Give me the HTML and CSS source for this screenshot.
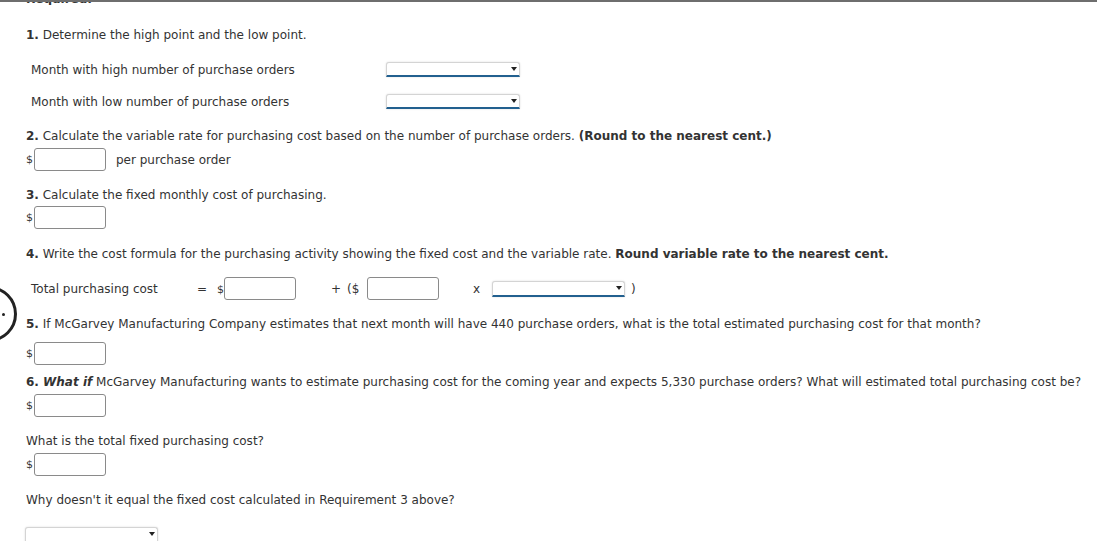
FILE: index.html
```html
<!DOCTYPE html>
<html>
<head>
<meta charset="utf-8">
<link rel="stylesheet" href="styles.css">
</head>
<body>
<div class="page">
  <div class="req-clip"><div class="req">Required:</div></div>

  <div class="q q1"><b>1.</b> Determine the high point and the low point.</div>
  <div class="sel-row r-high">
    <span class="lbl">Month with high number of purchase orders</span>
    <span class="dd"></span>
  </div>
  <div class="sel-row r-low">
    <span class="lbl">Month with low number of purchase orders</span>
    <span class="dd"></span>
  </div>

  <div class="q q2"><b>2.</b> Calculate the variable rate for purchasing cost based on the number of purchase orders. <b>(Round to the nearest cent.)</b></div>
  <div class="money m2"><span class="cur">$</span><span class="inp"></span><span class="after">per purchase order</span></div>

  <div class="q q3"><b>3.</b> Calculate the fixed monthly cost of purchasing.</div>
  <div class="money m3"><span class="cur">$</span><span class="inp"></span></div>

  <div class="q q4"><b>4.</b> Write the cost formula for the purchasing activity showing the fixed cost and the variable rate. <b>Round variable rate to the nearest cent.</b></div>
  <div class="formula">
    <span class="f-lbl">Total purchasing cost</span>
    <span class="f-eq">=</span>
    <span class="f-cur">$</span><span class="inp"></span>
    <span class="f-plus">+</span>
    <span class="f-paren">($</span><span class="inp"></span>
    <span class="f-x">x</span>
    <span class="dd dd-f"></span>
    <span class="f-close">)</span>
  </div>

  <div class="q q5"><b>5.</b> If McGarvey Manufacturing Company estimates that next month will have 440 purchase orders, what is the total estimated purchasing cost for that month?</div>
  <div class="money m5"><span class="cur">$</span><span class="inp"></span></div>

  <div class="q q6"><b>6. <i>What if</i></b> McGarvey Manufacturing wants to estimate purchasing cost for the coming year and expects 5,330 purchase orders? What will estimated total purchasing cost be?</div>
  <div class="money m6"><span class="cur">$</span><span class="inp"></span></div>

  <div class="q q7">What is the total fixed purchasing cost?</div>
  <div class="money m7"><span class="cur">$</span><span class="inp"></span></div>

  <div class="q q8">Why doesn't it equal the fixed cost calculated in Requirement 3 above?</div>
  <div class="bottom-dd"><span class="dd dd-b"></span></div>
</div>
<div class="nav-circle"><span class="nav-dot"></span></div>
</body>
</html>
```

FILE: styles.css
```css
html, body {
  margin: 0;
  padding: 0;
  background: #fff;
}
body {
  font-family: "DejaVu Sans", Verdana, sans-serif;
  font-size: 12px;
  color: #333;
  height: 541px;
  overflow: hidden;
  border-top: 2px solid #6e6e6e;
  box-sizing: border-box;
}
.page {
  padding-left: 26px;
  padding-right: 10px;
}
.req-clip {
  height: 3px;
  overflow: hidden;
}
.req {
  font-weight: bold;
  line-height: 16px;
  margin-top: -11px;
}
.q {
  line-height: 16px;
  padding-top: 1px;
  white-space: nowrap;
}
.q1 { margin-top: 21px; }
.sel-row {
  display: flex;
  align-items: center;
  height: 16px;
  padding-left: 5px;
}
.sel-row .lbl { padding-top: 1px; }
.r-high { margin-top: 18px; }
.r-low { margin-top: 16px; }
.lbl {
  width: 355px;
  line-height: 16px;
}
.dd {
  display: inline-block;
  position: relative;
  width: 134px;
  height: 15px;
  box-sizing: border-box;
  border: 1px solid #d4d4d4;
  border-bottom: 2px solid #22608f;
  border-radius: 3px 3px 0 0;
  box-shadow: 0 0 2px rgba(0,0,0,0.15);
  background: #fff;
}
.dd::after {
  content: "";
  position: absolute;
  right: 2px;
  top: 4px;
  border-left: 3px solid transparent;
  border-right: 3px solid transparent;
  border-top: 4px solid #222;
}
.q2 { margin-top: 18px; }
.money {
  display: flex;
  align-items: center;
  height: 23px;
}
.cur {
  width: 8px;
  font-size: 11px;
}
.inp {
  display: inline-block;
  width: 72px;
  height: 23px;
  box-sizing: border-box;
  border: 1px solid #8a8a8a;
  border-radius: 3px;
  background: #fff;
}
.after { margin-left: 10px; padding-top: 1px; }
.m2 { margin-top: 4px; }
.q3 { margin-top: 15px; }
.m3 { margin-top: 3px; }
.q4 { margin-top: 16px; }
.formula {
  display: flex;
  align-items: center;
  height: 23px;
  margin-top: 15px;
  padding-left: 5px;
}
.formula > span:not(.inp):not(.dd) { padding-top: 1px; }
.f-lbl { width: 166px; }
.f-eq { width: 20px; }
.f-cur { width: 7px; font-size: 11px; }
.f-plus { margin-left: 35px; width: 16px; }
.f-paren { width: 20px; }
.f-x { margin-left: 34px; width: 19px; }
.dd-f { width: 133px; height: 16px; }
.f-close { margin-left: 6px; }
.q5 { margin-top: 15px; }
.m5 { margin-top: 10px; }
.q6 { margin-top: 8px; }
.m6 { margin-top: 4px; }
.q7 { margin-top: 15px; }
.m7 { margin-top: 4px; }
.q8 { margin-top: 15px; }
.bottom-dd {
  margin-top: 19px;
  margin-left: -1px;
  height: 16px;
}
.dd-b { width: 133px; height: 16px; }
.nav-circle {
  position: absolute;
  left: -39px;
  top: 286px;
  width: 50px;
  height: 50px;
  border: 3px solid #222;
  border-radius: 50%;
}
.nav-dot {
  position: absolute;
  left: 38px;
  top: 24px;
  width: 3px;
  height: 3px;
  border-radius: 50%;
  background: #222;
}
```
